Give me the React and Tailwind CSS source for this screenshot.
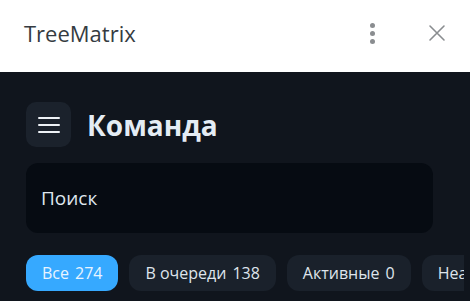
import React from 'react';

const chips = [
  { label: 'Все', count: 274, active: true },
  { label: 'В очереди', count: 138 },
  { label: 'Активные', count: 0 },
  { label: 'Неактивные', count: 136 },
];

export default function App() {
  return (
    <div className="w-[470px] h-[301px] overflow-hidden bg-[#10151d] font-['Open_Sans','Noto_Sans',sans-serif]">
      <header className="h-[72px] bg-white flex items-center pl-6 pr-[22px] pb-[6px]">
        <h1 className="text-[22px] font-medium text-[#353b41] flex-1">TreeMatrix</h1>
        <button type="button" aria-label="Menu" className="w-5 h-8 flex flex-col items-center justify-center gap-[3px] mr-[44px]">
          <span className="w-[5px] h-[5px] rounded-full bg-[#8a8d90]" />
          <span className="w-[5px] h-[5px] rounded-full bg-[#8a8d90]" />
          <span className="w-[5px] h-[5px] rounded-full bg-[#8a8d90]" />
        </button>
        <button type="button" aria-label="Close" className="text-[#8a8d90]">
          <svg width="22" height="22" viewBox="0 0 22 22" fill="none" stroke="currentColor" strokeWidth="1.6" strokeLinecap="round">
            <path d="M4 4L18 18M18 4L4 18" />
          </svg>
        </button>
      </header>

      <main className="pl-[26px] pt-[30px]">
        <div className="flex items-center gap-4">
          <button type="button" aria-label="Menu" className="w-[45px] h-[45px] rounded-[10px] bg-[#1b222c] flex flex-col items-center justify-center gap-[5px]">
            <span className="w-[22px] h-[2px] rounded bg-[#eef2f6]" />
            <span className="w-[22px] h-[2px] rounded bg-[#eef2f6]" />
            <span className="w-[22px] h-[2px] rounded bg-[#eef2f6]" />
          </button>
          <h2 className="text-[28px] font-bold text-[#e4ecf4] leading-none">Команда</h2>
        </div>

        <div className="mt-4 w-[407px] h-[70px] rounded-[12px] bg-[#060b12] flex items-center px-[15px]">
          <span className="text-[19px] text-[#dfe6ee]">Поиск</span>
        </div>

        <div className="mt-[22px] w-[438px] overflow-hidden flex gap-[11px]">
          {chips.map((c) => (
            <div
              key={c.label}
              className={
                c.active
                  ? 'shrink-0 h-9 rounded-[12px] px-4 flex items-center gap-[6px] bg-[#36a9ff] text-[#e8f4ff] text-[16px]'
                  : 'shrink-0 h-9 rounded-[12px] px-4 flex items-center gap-[6px] bg-[#1a212b] text-[#dfe5ec] text-[16px]'
              }
            >
              <span>{c.label}</span>
              <span>{c.count}</span>
            </div>
          ))}
        </div>
      </main>
    </div>
  );
}
